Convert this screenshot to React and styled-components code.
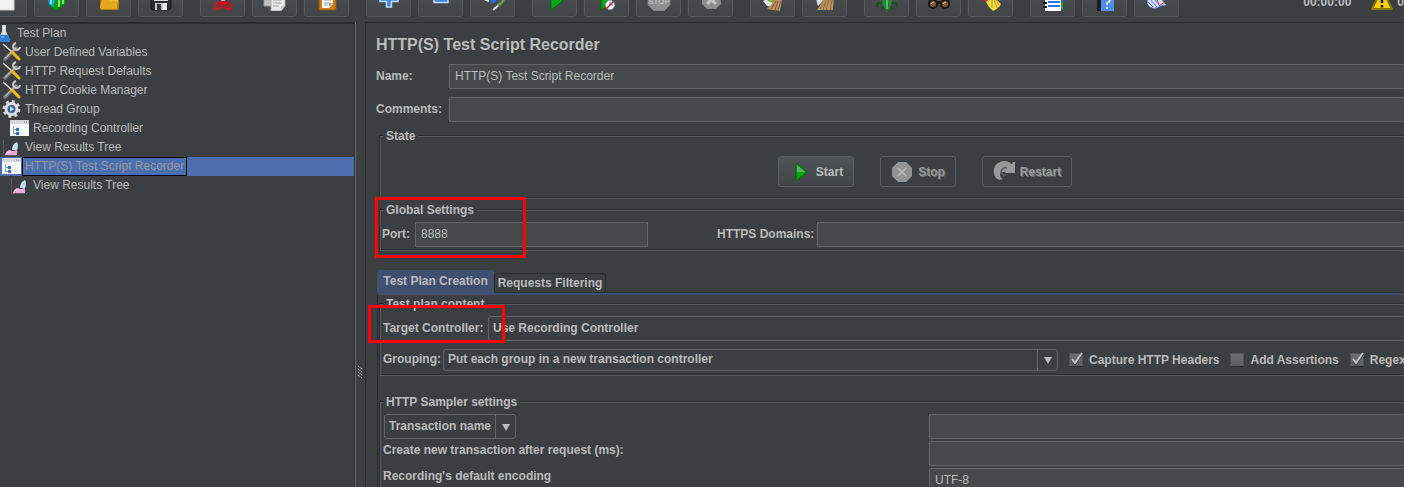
import React from "react";
import styled, { createGlobalStyle, css } from "styled-components";

const c = {
  bg: "#3c3f41",
  field: "#45494a",
  line: "#646464",
  dark: "#2a2c2e",
  text: "#bbbbbb",
  select: "#4b6eaf",
  tab: "#3f4f70",
};

const Global = createGlobalStyle`
  *, *::before, *::after { box-sizing: border-box; }
  html, body { margin: 0; padding: 0; background: ${c.bg}; overflow: hidden; }
  body, button, input, select {
    font-family: "Liberation Sans", Arial, sans-serif;
    font-size: 12px;
    color: ${c.text};
  }
`;

const Page = styled.div`
  height: 100vh;
  display: flex;
  flex-direction: column;
  overflow: hidden;
  background: ${c.bg};
`;

/* ---------- toolbar ---------- */
const Toolbar = styled.header`
  height: 22px;
  flex: none;
  display: flex;
  align-items: flex-end;
  justify-content: space-between;
  padding-bottom: 5px;
  overflow: hidden;
`;
const ToolGroups = styled.div`
  display: flex;
  gap: 17px;
  margin-left: -18px;
`;
const ToolGroup = styled.div`
  display: flex;
  gap: 7px;
`;
const ToolButton = styled.button`
  width: 45px;
  height: 36px;
  padding: 0;
  display: flex;
  align-items: center;
  justify-content: center;
  border: 1px solid #55595b;
  border-radius: 3px;
  background: linear-gradient(#4c5052, #414547);
`;
const Status = styled.div`
  height: 36px;
  display: flex;
  align-items: center;
  font-weight: bold;
  svg { margin-left: 19px; margin-right: 3px; }
`;
const StatusText = styled.span`
  padding-top: 6px;
`;

/* ---------- workspace ---------- */
const Workspace = styled.div`
  flex: 1;
  min-height: 0;
  display: flex;
`;
const Tree = styled.ul`
  flex: 0 0 355px;
  margin: 0;
  padding: 0;
  list-style: none;
  border: solid ${c.dark};
  border-width: 2px 1px 0 0;
  overflow: hidden;
`;
const TreeRow = styled.li`
  height: 19px;
  display: flex;
  align-items: flex-start;
  padding-left: ${(p) => p.$level * 8}px;
  margin-left: -6px;
  background: ${(p) => (p.$selected ? c.select : "transparent")};
  svg {
    flex: none;
    margin-top: -1px;
  }
`;
const TreeLabel = styled.span`
  height: 19px;
  line-height: 17px;
  padding: 0 2px;
  margin-left: 1px;
  border: 1px solid transparent;
  white-space: nowrap;
  ${(p) =>
    p.$selected &&
    css`
      border-color: #000;
      color: #95989c;
    `}
`;
const Divider = styled.div`
  flex: 0 0 10px;
  display: flex;
  justify-content: center;
  padding-top: 343px;
  border-left: 1px solid #6a6d6f;
`;
const Main = styled.main`
  flex: 1;
  min-width: 0;
  padding: 10px 0 0 10px;
  border: solid ${c.dark};
  border-width: 1px 0 0 1px;
  overflow: hidden;
`;
const Form = styled.form`
  margin-right: -74px;
`;
const Title = styled.h1`
  margin: 0 0 7px;
  font-size: 16px;
  line-height: 24px;
`;
const Row = styled.div`
  display: flex;
  align-items: center;
`;
const NameRow = styled(Row)`
  margin-bottom: 8px;
`;
const Label = styled.label`
  font-weight: bold;
  white-space: nowrap;
  padding-bottom: 2px;
  flex: 0 0 ${(p) => p.$width || "auto"};
`;
const StackLabel = styled.label`
  font-weight: bold;
  white-space: nowrap;
`;
const Field = styled.input`
  height: 25px;
  min-width: 0;
  padding: 0 5px 2px;
  border: 1px solid ${c.line};
  border-radius: 0;
  background: ${c.field};
  outline: none;
  flex: ${(p) => (p.$width ? `0 0 ${p.$width}` : "1 0 auto")};
  width: ${(p) => p.$width || "auto"};
`;
const Group = styled.fieldset`
  position: relative;
  min-width: 0;
  margin: ${(p) => p.$top}px 0 0 ${(p) => p.$left ?? 4}px;
  padding: 0 0 1px;
  border: 1px solid #585b5d;
  box-shadow: -1px -1px 0 ${c.dark}, inset 0 -1px 0 ${c.dark};
`;
const Legend = styled.legend`
  height: 16px;
  line-height: 16px;
  margin-left: 2px;
  padding: 0 3px;
  font-weight: bold;
  background: ${c.bg};
`;
const Highlight = styled.div`
  position: absolute;
  top: ${(p) => p.$top}px;
  left: ${(p) => p.$left}px;
  width: ${(p) => p.$w}px;
  height: ${(p) => p.$h}px;
  border: 3px solid #ff0000;
  z-index: 2;
  pointer-events: none;
`;
const Actions = styled.div`
  display: flex;
  justify-content: center;
  gap: 26px;
  padding: 12px 8px 10px 0;
`;
const Action = styled.button`
  height: 31px;
  display: flex;
  align-items: center;
  gap: 5px;
  padding: 0 10px;
  border: 1px solid #5a5e60;
  border-radius: 3px;
  background: linear-gradient(#4f5456, #414547);
  font-weight: bold;
  &:disabled {
    background: none;
    color: #9a9a9a;
    text-shadow: 1px 1px 0 #66696b;
  }
`;
const GlobalRow = styled(Row)`
  padding: 4px 0 2px 1px;
`;
const Domains = styled(Row)`
  flex: 1;
  margin-left: 69px;
`;

/* ---------- tabs ---------- */
const Tabs = styled.div`
  display: flex;
  align-items: flex-end;
  height: 23px;
  margin: 19px 0 0 1px;
`;
const Tab = styled.button`
  height: ${(p) => (p.$active ? 23 : 20)}px;
  width: ${(p) => p.$width};
  padding: 0 0 ${(p) => (p.$active ? 2 : 0)}px;
  border: 1px solid ${c.dark};
  border-bottom-width: ${(p) => (p.$active ? 0 : 1)}px;
  border-color: ${(p) => (p.$active ? c.tab : c.dark)};
  border-radius: 3px 3px 0 0;
  background: ${(p) => (p.$active ? c.tab : c.bg)};
  font-weight: bold;
  white-space: nowrap;
`;
const TabFill = styled.div`
  flex: 1;
  height: 1px;
  background: ${c.dark};
`;
const TabPanel = styled.div`
  height: 300px;
  margin-left: 1px;
  padding: 1px 0 0 0;
  border-top: 2px solid ${c.tab};
  border-left: 1px solid ${c.dark};
`;
const TargetRow = styled(Row)`
  padding: 4px 0 8px 2px;
`;
const GroupingRow = styled(Row)`
  padding: 0 0 3px 2px;
`;

const Combo = styled.div`
  display: grid;
  grid-template-columns: 1fr 21px;
  align-items: center;
  height: ${(p) => p.$h}px;
  flex: ${(p) => (p.$width ? `0 0 ${p.$width}` : "1")};
  width: ${(p) => p.$width || "auto"};
`;
const ComboSelect = styled.select`
  grid-area: 1 / 1 / 2 / 3;
  width: 100%;
  height: 100%;
  appearance: none;
  padding: 0 22px 2px 4px;
  border: 1px solid ${c.line};
  border-radius: 3px;
  background: ${c.bg};
  font-weight: bold;
  outline: none;
`;
const ComboArrow = styled.span`
  grid-area: 1 / 2;
  height: 100%;
  display: flex;
  align-items: center;
  justify-content: center;
  border-left: 1px solid ${c.line};
  pointer-events: none;
  z-index: 1;
`;
const Check = styled.label`
  display: grid;
  grid-template-columns: 14px auto;
  column-gap: 6px;
  align-items: center;
  margin-left: 11px;
  font-weight: bold;
  white-space: nowrap;
  svg {
    grid-area: 1 / 1;
    z-index: 1;
    pointer-events: none;
  }
`;
const Box = styled.input`
  grid-area: 1 / 1;
  appearance: none;
  width: 14px;
  height: 14px;
  margin: 0;
  border: 1px solid #515354;
  border-bottom-color: #2c2e2f;
  background: linear-gradient(#6c6e6f, #5a5c5d);
`;
const Sampler = styled.div`
  display: grid;
  grid-template-columns: 1fr 1fr;
  padding: 4px 2px 0;
`;
const LabelColumn = styled.div`
  display: flex;
  flex-direction: column;
  gap: 4px;
  line-height: 22px;
`;
const ComboSlot = styled.div`
  margin-bottom: -4px;
  padding-left: 1px;
`;
const FieldColumn = styled.div`
  display: flex;
  flex-direction: column;
  gap: 2px;
  & > input { flex: none; }
`;

/* ---------- drawings ---------- */
const Svg = ({ s = 24, children }) => (
  <svg width={s} height={s} viewBox={`0 0 ${s} ${s}`} aria-hidden="true">{children}</svg>
);

const toolIcons = {
  New: <path d="M3 1h18v22H3z" fill="#f3f3f3" stroke="#cfcfcf" />,
  Templates: (
    <g>
      <path d="M2 4l9 4v15l-7-4z" fill="#1ba9d6" />
      <path d="M11 8l10-4-1 13-8 6-4-2z" fill="#0b9c12" />
      <path d="M14 10v10M18 8v9" stroke="#7be66c" strokeWidth="2" />
      <path d="M6 9v8" stroke="#76e0f7" strokeWidth="2" />
      <path d="M4 18l7 5 9-6" stroke="#08780e" fill="none" strokeWidth="1.5" />
    </g>
  ),
  Open: (
    <g>
      <path d="M3 4h8l2 3h7v14H3z" fill="#a87008" />
      <path d="M4 10h2l2-1h14v12q0 2-2 2H5q-2 0-2-2z" fill="#b97c08" />
      <path d="M5 13h16l-1 9H5q-2 0-2-2z" fill="#e3a922" />
      <path d="M7 12l2-2h12v5z" fill="#f0c04a" />
    </g>
  ),
  Save: (
    <g>
      <path d="M2 3h20v18l-2 2H3l-1-2z" fill="#2c2e31" stroke="#191a1c" />
      <path d="M5 3h14v11H5z" fill="#d9dbdd" />
      <path d="M6 16h12v7H6z" fill="#c4c7ca" />
      <path d="M8 17h4v6H8z" fill="#303338" />
      <path d="M14 16h4v7h-4z" fill="#eeeff0" />
    </g>
  ),
  Cut: (
    <g fill="none">
      <path d="M8 2l6 14M16 2l-6 14" stroke="#d4d6d8" strokeWidth="2" />
      <path d="M11 14q-1 2-4 2-3 1-3 4 0 3 3 2 4-1 4-8zM13 14q1 2 4 2 3 1 3 4 0 3-3 2-4-1-4-8z" stroke="#c8141f" strokeWidth="2.500" />
    </g>
  ),
  Copy: (
    <g>
      <path d="M1 2h13v17H1z" fill="#c9c9c9" stroke="#8f8f8f" />
      <path d="M8 6h14v13l-4 5H8z" fill="#ececec" stroke="#a8a8a8" />
      <path d="M3 13h5M3 16h5M10 13h9M10 16h9M10 19h6" stroke="#a4a4a4" />
      <path d="M22 19h-4v4z" fill="#c5c5c5" />
    </g>
  ),
  Paste: (
    <g>
      <path d="M4 2h17v21H4z" fill="#c97c16" stroke="#92560a" />
      <path d="M7 5h11v12l-4 4H7z" fill="#f4f4f1" />
      <path d="M9 13h7M9 16h6M9 18h4" stroke="#a3a3a3" />
      <path d="M18 16h-4v4z" fill="#a4a49a" />
    </g>
  ),
  Expand: <path d="M9.500 3h5v6.500H21v5h-6.500V20h-5v-5.500H3v-5h6.500z" fill="#3d87d4" stroke="#b9dcfa" strokeWidth="1.500" />,
  Collapse: <path d="M5 9.500h14v6H5z" fill="#3d87d4" stroke="#b9dcfa" strokeWidth="1.500" />,
  Toggle: (
    <g fill="none">
      <path d="M3 12l5 2" stroke="#e6e9ec" strokeWidth="2" />
      <path d="M11 12l3 3" stroke="#2877ef" strokeWidth="4" />
      <path d="M15 12l-4 4" stroke="#2877ef" strokeWidth="1.500" />
      <path d="M12 23l8-7" stroke="#d5dbd8" strokeWidth="2" />
      <path d="M17 19l6-6" stroke="#6b9d58" strokeWidth="2.500" />
    </g>
  ),
  Start: <path d="M8 1l12 13L8 23z" fill="#08a512" stroke="#04600a" />,
  "Start no pauses": (
    <g>
      <path d="M6 1l12 13L6 23z" fill="#08a512" stroke="#04600a" />
      <circle cx="15" cy="18" r="4.500" fill="#f4f7fd" stroke="#8fa5d5" />
      <path d="M15 15v3h3" stroke="#336bd1" fill="none" />
      <path d="M11 22l8-8" stroke="#e02020" strokeWidth="1.500" />
    </g>
  ),
  Stop: (
    <g>
      <path d="M7 1h10l6 6v11l-6 6H7l-6-6V7z" fill="#8f8f8f" stroke="#7a7a7a" />
      <text x="12" y="17" textAnchor="middle" fontSize="8" fontWeight="bold" fill="#b8b8b8">STOP</text>
    </g>
  ),
  Shutdown: (
    <g>
      <path d="M8 2h9l5 5v10l-5 5H8l-5-5V7z" fill="#8b8b8b" />
      <path d="M8 8l9 9M17 8l-9 9" stroke="#c6c6c6" strokeWidth="3" />
    </g>
  ),
  Clear: (
    <g>
      <path d="M2 14l5-3 5 4-1 5-5-1z" fill="#dfe1df" />
      <path d="M7 12l6 2" stroke="#76b52e" strokeWidth="4" />
      <path d="M13 7l8 6-2 11-13-2 5-5z" fill="#b88d60" />
      <path d="M15 14l-5 8M17 14l-3 9M20 14l-3 9" stroke="#85603a" />
    </g>
  ),
  "Clear all": (
    <g>
      <path d="M3 12l6-3 2 4-6 6z" fill="#dfe2e2" />
      <path d="M10 7h11l-1 16H4q3-4 5-9z" fill="#bd9464" />
      <path d="M10 14L7 22M13 13l-3 10M16 13l-3 10M19 13l-2 10" stroke="#8b673c" />
    </g>
  ),
  Debug: (
    <g>
      <path d="M6 12l-4-3M7 16H3l-1 4M9 19l-3 4M18 12l4-3M17 16h4l1 4M15 19l3 4" stroke="#1f4d24" strokeWidth="2" fill="none" />
      <path d="M7 6q5-5 10 0 2 11-5 18-7-7-5-18z" fill="#25843a" />
      <path d="M12 5v17" stroke="#67c574" strokeWidth="1.500" />
    </g>
  ),
  Search: (
    <g>
      <path d="M4 5h6v6h4V5h6l3 12H1z" fill="#26221f" />
      <path d="M9 13h6" stroke="#555" strokeWidth="2" />
      <circle cx="6" cy="17" r="4" fill="#8e5838" stroke="#191817" strokeWidth="2" />
      <circle cx="18" cy="17" r="4" fill="#8e5838" stroke="#191817" strokeWidth="2" />
      <path d="M4 17q1-2 3-2M16 17q1-2 3-2" stroke="#e6bf99" fill="none" />
    </g>
  ),
  "Reset search": (
    <g>
      <path d="M5 10l7 3-2 3-5-2z" fill="#d12626" />
      <path d="M14 9l8 8q-3 5-8 7-5-4-7-9z" fill="#f2d94a" />
      <path d="M13 13l0 8M15 13l3 8M17 13l3 5" stroke="#c09f1a" />
    </g>
  ),
  "Function helper": (
    <g>
      <path d="M18 2h4v21h-4z" fill="#2d9b42" />
      <path d="M19 10h4v5h-4z" fill="#225cc6" />
      <path d="M4 1h16v23H4z" fill="#fff" />
      <path d="M7 11h12M7 15h12M7 19h12" stroke="#2478e4" strokeWidth="2" />
      <path d="M2 12h4M2 16h4M2 20h4" stroke="#1d1d1d" strokeWidth="2" />
    </g>
  ),
  Help: (
    <g>
      <path d="M4 1h17v23H4z" fill="#4d8fe6" />
      <path d="M4 1h4v23H4z" fill="#1a1e24" />
      <path d="M12 13q0-2 2-2 3 0 3 2 0 2-3 3v2M14 20v2" stroke="#fff" fill="none" strokeWidth="1.500" />
    </g>
  ),
  About: (
    <g>
      <path d="M2 8q6 0 9 5l2-8q1 6 4 8l4 5-6 1q-7 5-12-1z" fill="#d6e0f8" stroke="#6d8ccf" />
      <path d="M4 11l8 9M3 15l5 5M8 11l7 8" stroke="#4777d3" />
      <path d="M10 9l4 8M15 18l5-3" stroke="#d4333e" />
    </g>
  ),
};

const toolGroups = [
  ["New", "Templates", "Open", "Save"],
  ["Cut", "Copy", "Paste"],
  ["Expand", "Collapse", "Toggle"],
  ["Start", "Start no pauses", "Stop", "Shutdown"],
  ["Clear", "Clear all"],
  ["Debug", "Search", "Reset search"],
  ["Function helper", "Help", "About"],
];

const treeIcons = {
  flask: (
    <g>
      <path d="M8 2h4v6l4 9q0 2-2 2H5q-2 0-1-2l4-9z" fill="#c9d2da" />
      <path d="M6 12h8l2 5q0 2-2 2H5q-2 0-1-2z" fill="#2f7fd8" />
      <path d="M10 3v8" stroke="#fff" />
      <path d="M7 14h3" stroke="#a4d0f8" />
    </g>
  ),
  tools: (
    <g fill="none">
      <path d="M3 17L14 6" stroke="#7d7d7d" strokeWidth="3.500" strokeLinecap="round" />
      <path d="M3 16.500L14 5.500" stroke="#d5d5d5" />
      <path d="M14 1q-3 1-3 4 1 3 4 3 3-1 3-3" stroke="#c8c8c8" strokeWidth="2" />
      <path d="M1 2l9 8" stroke="#e0e0e0" strokeWidth="1.500" />
      <path d="M10 10l7 7" stroke="#efbd18" strokeWidth="3" strokeLinecap="round" />
    </g>
  ),
  gear: (
    <g>
      <circle cx="9.500" cy="10" r="7.500" fill="none" stroke="#cfd2d5" strokeWidth="3" strokeDasharray="3 2.890" />
      <circle cx="9.500" cy="10" r="7" fill="#dcdfe2" />
      <circle cx="9.500" cy="10" r="4" fill="#3d5f88" />
      <path d="M8 7.500l4.500 2.500L8 12.500z" fill="#b8dcff" />
    </g>
  ),
  window: (
    <g>
      <path d="M0 2h19v16H0z" fill="#f5f6f8" />
      <path d="M0 2h19v4H0z" fill="#d5d7db" />
      <path d="M14 4h1M16 4h1" stroke="#777" />
      <path d="M3.500 8v8M3 11.500h3M3 15.500h3" stroke="#8fa3b5" fill="none" />
      <circle cx="7.500" cy="11.500" r="1.800" fill="#2a70bd" />
      <circle cx="7.500" cy="15.500" r="1.800" fill="#2a70bd" />
    </g>
  ),
  chart: (
    <g>
      <path d="M1.500 3v15.500H17" fill="none" stroke="#5a5d60" />
      <path d="M10 13q0-6 5-8 2 3 0 8z" fill="#bfe0fa" />
      <path d="M3 18q1-4 4-5l4 1 4-1v5z" fill="#f0a6de" />
      <path d="M4 17q2-3 5-2" stroke="#fbdcf5" fill="none" />
    </g>
  ),
};

const treeRows = [
  ["flask", "Test Plan", 0],
  ["tools", "User Defined Variables", 1],
  ["tools", "HTTP Request Defaults", 1],
  ["tools", "HTTP Cookie Manager", 1],
  ["gear", "Thread Group", 1],
  ["window", "Recording Controller", 2],
  ["chart", "View Results Tree", 1],
  ["window", "HTTP(S) Test Script Recorder", 1, true],
  ["chart", "View Results Tree", 2],
];

const Dropdown = ({ id, value, width, h, label }) => (
  <Combo $width={width} $h={h}>
    <ComboSelect id={id} aria-label={label}>
      <option>{value}</option>
    </ComboSelect>
    <ComboArrow>
      <svg width="8" height="8" viewBox="0 0 8 8" aria-hidden="true">
        <path d="M0 1h8L4 8z" fill="#bbb" />
      </svg>
    </ComboArrow>
  </Combo>
);

const Tick = ({ label, checked }) => (
  <Check>
    <Box type="checkbox" defaultChecked={checked} />
    {checked && (
      <svg width="14" height="16" viewBox="0 0 14 16" aria-hidden="true">
        <path d="M3 8l3 4 7-10" fill="none" stroke="#2b2b2b" strokeWidth="2" />
        <path d="M3 7l3 4 7-10" fill="none" stroke="#c6c6c6" strokeWidth="2" />
      </svg>
    )}
    <span>{label}</span>
  </Check>
);

export default function App() {
  return (
    <Page>
      <Global />
      <Toolbar>
        <ToolGroups>
          {toolGroups.map((names) => (
            <ToolGroup key={names[0]}>
              {names.map((n) => (
                <ToolButton key={n} type="button" aria-label={n}>
                  <Svg>{toolIcons[n]}</Svg>
                </ToolButton>
              ))}
            </ToolGroup>
          ))}
        </ToolGroups>
        <Status>
          <StatusText>00:00:00</StatusText>
          <Svg>
            <path d="M12 2l10 20H2z" fill="#f5cf0b" stroke="#8a7408" strokeLinejoin="round" strokeWidth="2" />
            <path d="M12 8v8M12 18v2.500" stroke="#1d1a08" strokeWidth="2.500" />
          </Svg>
          <StatusText>0</StatusText>
        </Status>
      </Toolbar>
      <Workspace>
        <Tree role="tree" aria-label="Test plan">
          {treeRows.map(([icon, text, level, selected], i) => (
            <TreeRow key={i} role="treeitem" aria-selected={!!selected} $level={level} $selected={selected}>
              <Svg s={19}>{treeIcons[icon]}</Svg>
              <TreeLabel $selected={selected}>{text}</TreeLabel>
            </TreeRow>
          ))}
        </Tree>
        <Divider>
          <svg width="5" height="15" viewBox="0 0 5 15" aria-hidden="true">
            <path d="M0 1l4 3M0 4l4 3M0 7l4 3M0 10l4 3" stroke="#e0e0e0" strokeDasharray="1 1" />
          </svg>
        </Divider>
        <Main>
          <Form onSubmit={(e) => e.preventDefault()}>
            <Title>HTTP(S) Test Script Recorder</Title>
            <NameRow>
              <Label htmlFor="name" $width="73px">Name:</Label>
              <Field id="name" defaultValue="HTTP(S) Test Script Recorder" />
            </NameRow>
            <Row>
              <Label htmlFor="comments" $width="73px">Comments:</Label>
              <Field id="comments" />
            </Row>
            <Group $top={6}>
              <Legend>State</Legend>
              <Actions>
                <Action type="button">
                  <Svg s={22}>
                    <path d="M7 2l11 9-11 9z" fill="#07a80f" stroke="#056408" />
                    <path d="M8 4l8 7H8z" fill="#5fae62" />
                  </Svg>
                  Start
                </Action>
                <Action type="button" disabled>
                  <Svg s={22}>
                    <path d="M7 1h8l6 6v8l-6 6H7l-6-6V7z" fill="#929292" />
                    <path d="M7 7l8 8M15 7l-8 8" stroke="#bdbdbd" strokeWidth="1.500" />
                  </Svg>
                  Stop
                </Action>
                <Action type="button" disabled>
                  <Svg s={22}>
                    <path d="M22 1v11H13q-4-3-6 1 0 4 3 5-4 2-7-1Q-1 12 2 5 6 0 12 0q4 0 6 3h1l1-2z" fill="#999" />
                    <path d="M14 7q-5-1-6 4 1 4 5 3" fill="none" stroke="#55585a" strokeWidth="1.500" />
                  </Svg>
                  Restart
                </Action>
              </Actions>
            </Group>
            <Group $top={3}>
              <Legend>Global Settings</Legend>
              <Highlight $top={-21} $left={-6} $w={151} $h={61} />
              <GlobalRow>
                <Label htmlFor="port" $width="33px">Port:</Label>
                <Field id="port" defaultValue="8888" $width="233px" />
                <Domains>
                  <Label htmlFor="domains" $width="100px">HTTPS Domains:</Label>
                  <Field id="domains" />
                </Domains>
              </GlobalRow>
            </Group>
            <Tabs role="tablist">
              <Tab type="button" role="tab" aria-selected="true" $active $width="117px">Test Plan Creation</Tab>
              <Tab type="button" role="tab" aria-selected="false" $width="112px">Requests Filtering</Tab>
              <TabFill />
            </Tabs>
            <TabPanel role="tabpanel">
              <Group $top={0} $left={2}>
                <Legend>Test plan content</Legend>
                <Highlight $top={-7} $left={-13} $w={137} $h={38} />
                <TargetRow>
                  <Label htmlFor="target" $width="105px">Target Controller:</Label>
                  <Dropdown id="target" value="Use Recording Controller" h={25} />
                </TargetRow>
                <GroupingRow>
                  <Label htmlFor="grouping" $width="60px">Grouping:</Label>
                  <Dropdown id="grouping" value="Put each group in a new transaction controller" width="615px" h={22} />
                  <Tick label="Capture HTTP Headers" checked />
                  <Tick label="Add Assertions" />
                  <Tick label="Regex matching" checked />
                </GroupingRow>
              </Group>
              <Group $top={18} $left={2}>
                <Legend>HTTP Sampler settings</Legend>
                <Sampler>
                  <LabelColumn>
                    <ComboSlot>
                      <Dropdown label="Naming scheme" value="Transaction name" width="132px" h={25} />
                    </ComboSlot>
                    <StackLabel htmlFor="delay">Create new transaction after request (ms):</StackLabel>
                    <StackLabel htmlFor="encoding">Recording's default encoding</StackLabel>
                  </LabelColumn>
                  <FieldColumn>
                    <Field aria-label="Transaction name" />
                    <Field id="delay" />
                    <Field id="encoding" defaultValue="UTF-8" />
                  </FieldColumn>
                </Sampler>
              </Group>
            </TabPanel>
          </Form>
        </Main>
      </Workspace>
    </Page>
  );
}
